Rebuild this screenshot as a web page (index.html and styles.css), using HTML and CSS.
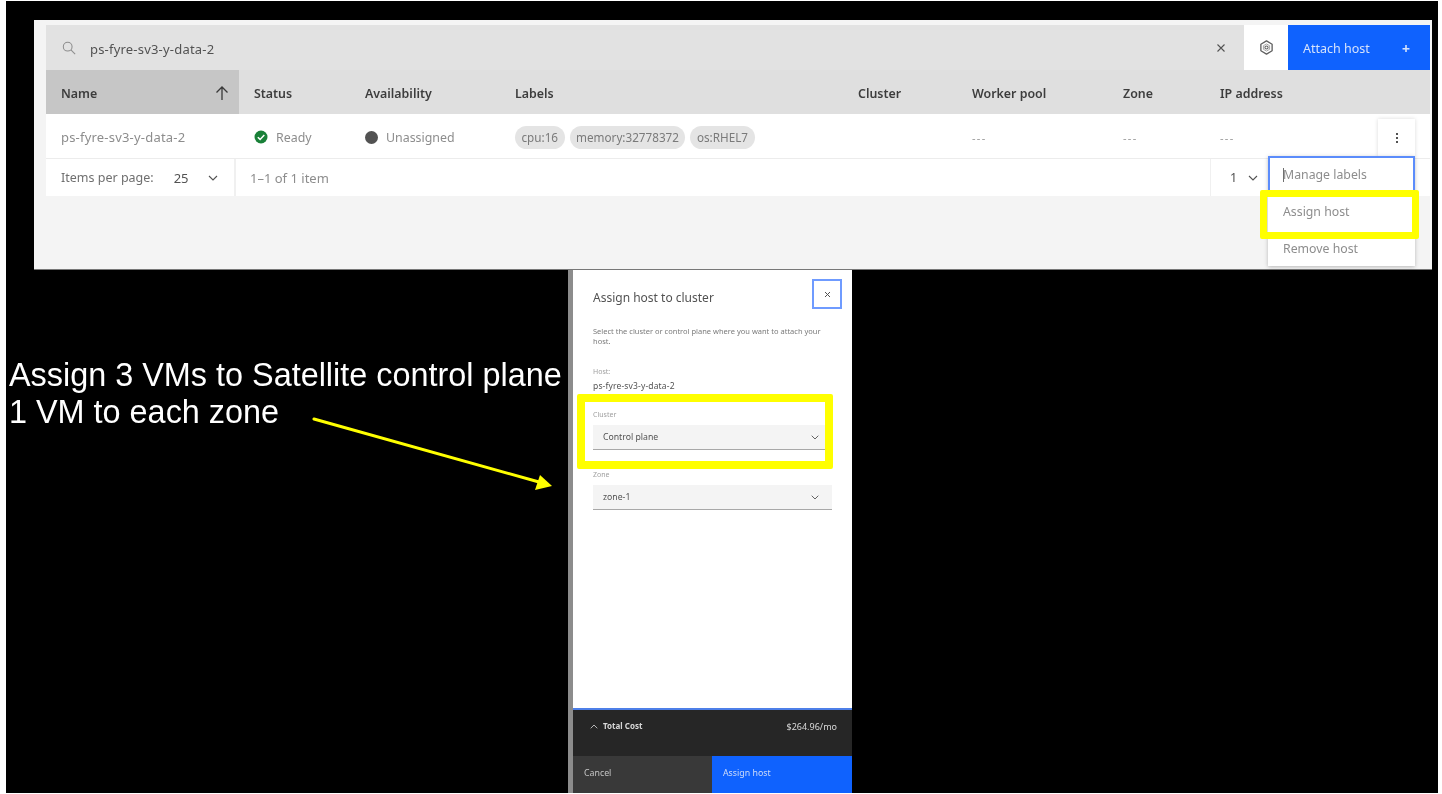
FILE: index.html
```html
<!DOCTYPE html>
<html>
<head>
  <meta charset="utf-8">
  <title>Assign host</title>
  <link rel="stylesheet" href="styles.css">
</head>
<body>
<div id="slide">

  <div id="hosts_panel">
    <div class="toolbar">
      <svg class="search_icon" width="14" height="14" viewBox="0 0 16 16"><circle cx="6.5" cy="6.5" r="5" fill="none" stroke="#8d8d8d" stroke-width="1.2"/><path d="M10.2 10.2L15 15" stroke="#8d8d8d" stroke-width="1.2"/></svg>
      <span class="search_text host_name">ps-fyre-sv3-y-data-2</span>
      <svg class="clear_icon" width="10" height="10" viewBox="0 0 10 10"><path d="M1.5 1.5l7 7M8.5 1.5l-7 7" stroke="#525252" stroke-width="1.1"/></svg>
      <div class="settings_btn">
        <svg width="15" height="15" viewBox="0 0 16 16"><path d="M8 1l6 3.500v7L8 15l-6-3.500v-7z" fill="none" stroke="#5f5f5f" stroke-width="1.400" stroke-linejoin="round"/><path d="M8 4.200l3.300 1.900v3.800L8 11.800l-3.300-1.900V6.100z" fill="none" stroke="#8d8d8d" stroke-width=".8"/><circle cx="8" cy="8" r="1.700" fill="none" stroke="#5f5f5f" stroke-width="1.100"/></svg>
      </div>
      <div class="attach_btn"><span>Attach host</span><span class="plus">+</span></div>
    </div>

    <div class="table_row table_head">
      <div class="cell name_cell">Name
        <svg width="14" height="16" viewBox="0 0 14 16"><path d="M7 15V2M1.500 7.500L7 2l5.500 5.500" fill="none" stroke="#393939" stroke-width="1.300"/></svg>
      </div>
      <div class="cell">Status</div>
      <div class="cell">Availability</div>
      <div class="cell">Labels</div>
      <div class="cell">Cluster</div>
      <div class="cell">Worker pool</div>
      <div class="cell">Zone</div>
      <div class="cell">IP address</div>
    </div>

    <div class="table_row table_body">
      <div class="cell host_name">ps-fyre-sv3-y-data-2</div>
      <div class="cell">
        <svg class="status_icon" width="14" height="14" viewBox="0 0 14 14"><circle cx="7" cy="7" r="6.500" fill="#198038"/><path d="M3.800 7.200l2.300 2.200 4.200-4.300" fill="none" stroke="#fff" stroke-width="1.500"/></svg>
        Ready
      </div>
      <div class="cell"><span class="dot"></span>Unassigned</div>
      <div class="cell chips">
        <span class="chip">cpu:16</span>
        <span class="chip">memory:32778372</span>
        <span class="chip">os:RHEL7</span>
      </div>
      <div class="cell"></div>
      <div class="cell dashes">---</div>
      <div class="cell dashes">---</div>
      <div class="cell dashes">---</div>
    </div>

    <div class="pager">
      <div class="pager_left">
        <span>Items per page:</span>
        <span class="pager_num">25</span>
        <svg class="chev" width="10" height="6" viewBox="0 0 10 6"><path d="M1 1l4 4 4-4" fill="none" stroke="#525252" stroke-width="1.100"/></svg>
      </div>
      <div class="pager_count">1–1 of 1 item</div>
      <div class="pager_right">
        <span class="pager_page">1</span>
        <svg class="chev" width="10" height="6" viewBox="0 0 10 6"><path d="M1 1l4 4 4-4" fill="none" stroke="#525252" stroke-width="1.100"/></svg>
      </div>
    </div>

    <div class="overflow_btn"><i></i><i></i><i></i></div>
    <div class="overflow_menu">
      <div class="menu_item menu_focus"><span class="caret"></span>Manage labels</div>
      <div class="menu_item">Assign host</div>
      <div class="menu_item">Remove host</div>
    </div>
  </div>
  <div class="yellow_box assign_mark"></div>

  <div id="drawer_edge"></div>
  <div id="drawer">
    <div class="drawer_body">
      <div class="drawer_head">
        <h2>Assign host to cluster</h2>
        <div class="close_btn">
          <svg width="7" height="7" viewBox="0 0 7 7"><path d="M1 1l5 5M6 1L1 6" stroke="#525252" stroke-width="1"/></svg>
        </div>
      </div>
      <p class="drawer_desc">Select the cluster or control plane where you want to attach your host.</p>
      <div class="field_label host_label">Host:</div>
      <div class="host_value">ps-fyre-sv3-y-data-2</div>
      <div class="field_label cluster_label">Cluster</div>
      <div class="select">Control plane
        <svg width="8" height="5" viewBox="0 0 8 5"><path d="M.7.7L4 4 7.300.7" fill="none" stroke="#525252" stroke-width=".9"/></svg>
      </div>
      <div class="field_label zone_label">Zone</div>
      <div class="select">zone-1
        <svg width="8" height="5" viewBox="0 0 8 5"><path d="M.7.7L4 4 7.300.7" fill="none" stroke="#525252" stroke-width=".9"/></svg>
      </div>
    </div>
    <div class="cost_bar">
      <div class="cost_name">
        <svg width="8" height="5" viewBox="0 0 8 5"><path d="M.7 4.300L4 1l3.300 3.300" fill="none" stroke="#c6c6c6" stroke-width=".9"/></svg>
        Total Cost
      </div>
      <div class="cost_value">$264.96/mo</div>
    </div>
    <div class="drawer_btns">
      <div class="btn_cancel">Cancel</div>
      <div class="btn_assign">Assign host</div>
    </div>
  </div>
  <div class="yellow_box cluster_mark"></div>

  <div id="note">Assign 3 VMs to Satellite control plane<br>1 VM to each zone</div>
  <svg id="arrow" width="260" height="80" viewBox="0 0 260 80">
    <path d="M3 3L228 66" stroke="#ffff00" stroke-width="3" stroke-linecap="round"/>
    <path d="M241 70L224 74L229 59z" fill="#ffff00"/>
  </svg>
</div>
</body>
</html>
```

FILE: styles.css
```css
html, body {
  height: 100%;
  margin: 0;
}
body {
  background-color: #fff;
  font-family: "Noto Sans", sans-serif;
  overflow: hidden;
}

/* the slide is a free canvas, the pasted screenshots sit on it */
#slide {
  position: absolute;
  left: 6px;
  top: 1px;
  width: 1432px;
  height: 792px;
  background: #000;
  filter: blur(0.6px);
}

#hosts_panel {
  position: absolute;
  left: 28px;
  top: 19px;
  width: 1398px;
  height: 250px;
  box-sizing: border-box;
  padding: 5px 2px 0 12px;
  background: #f4f4f4;
  border-bottom: 1px solid #777;
}

.host_name {
  font-size: 13px;
  letter-spacing: 0.2px;
}

.toolbar {
  display: flex;
  align-items: center;
  height: 45px;
  background: #e2e2e2;
  color: #525252;
  font-size: 12.500px;
}
.search_icon {
  margin-left: 16px;
}
.search_text {
  margin-left: 14px;
  padding-top: 2px;
  flex: 1;
}
.clear_icon {
  margin-right: 18px;
}
.settings_btn {
  width: 44px;
  height: 45px;
  background: #fff;
  display: flex;
  align-items: center;
  justify-content: center;
}
.attach_btn {
  width: 142px;
  height: 45px;
  box-sizing: border-box;
  padding: 2px 20px 0 15px;
  background: #0f62fe;
  color: #d5e2fb;
  display: flex;
  align-items: center;
  justify-content: space-between;
}
.plus {
  font-size: 14px;
  font-weight: 700;
}

.table_row {
  display: grid;
  grid-template-columns: 193px 111px 150px 343px 114px 151px 97px 225px;
  align-items: center;
  font-size: 12.400px;
}
.cell {
  padding-left: 15px;
  display: flex;
  align-items: center;
  height: 100%;
}
.table_head {
  height: 44px;
  background: #dfdfdf;
  color: #3d3d3d;
  font-weight: 600;
}
.table_head .cell {
  box-sizing: border-box;
  padding-top: 2px;
}
.table_head .name_cell {
  background: #c6c6c6;
  justify-content: space-between;
  padding-right: 10px;
}
.table_body {
  height: 45px;
  box-sizing: border-box;
  padding-top: 2px;
  background: #fff;
  border-bottom: 1px solid #ececec;
  color: #8d8d8d;
}
.status_icon {
  margin-right: 8px;
}
.dot {
  width: 13px;
  height: 13px;
  border-radius: 50%;
  background: #525252;
  margin-right: 8px;
}
.chips {
  gap: 5px;
}
.chip {
  padding: 0 6.500px;
  height: 23px;
  line-height: 22px;
  border-radius: 12px;
  background: #e4e4e4;
  color: #7a7a7a;
  font-size: 11.700px;
  white-space: nowrap;
}
.dashes {
  color: #9a9a9a;
  font-size: 11px;
  letter-spacing: 1.300px;
}

.pager {
  display: flex;
  align-items: center;
  height: 37px;
  background: #fff;
  font-size: 12.500px;
  color: #6f6f6f;
}
.pager_left {
  width: 190px;
  height: 100%;
  box-sizing: border-box;
  padding-left: 15px;
  display: flex;
  align-items: center;
  border-right: 2px solid #f0f0f0;
}
.pager_num {
  margin-left: 20px;
  color: #525252;
  font-size: 13px;
}
.pager_left .chev {
  margin-left: 19px;
}
.pager_count {
  flex: 1;
  padding-left: 14px;
  font-size: 13px;
  color: #8d8d8d;
}
.pager_right {
  width: 220px;
  height: 100%;
  box-sizing: border-box;
  padding-left: 19px;
  display: flex;
  align-items: center;
  border-left: 1px solid #f0f0f0;
}
.pager_page {
  color: #525252;
}
.pager_right .chev {
  margin-left: 11px;
}

/* menu lies over the table */
.overflow_btn {
  position: absolute;
  left: 1344px;
  top: 99px;
  width: 37px;
  height: 38px;
  background: #fff;
  box-shadow: 0 0 4px rgba(0, 0, 0, 0.15);
  display: flex;
  flex-direction: column;
  align-items: center;
  justify-content: center;
  gap: 2px;
}
.overflow_btn i {
  width: 2px;
  height: 2px;
  background: #525252;
}
.overflow_menu {
  position: absolute;
  left: 1234px;
  top: 136px;
  width: 147px;
  height: 110px;
  background: #fff;
  box-shadow: 0 1px 4px rgba(0, 0, 0, 0.25);
  font-size: 12.300px;
  color: #8d8d8d;
}
.menu_item {
  height: 37px;
  box-sizing: border-box;
  padding-left: 15px;
  display: flex;
  align-items: center;
}
.menu_focus {
  border: 2px solid #5b8cfb;
  border-bottom: 0;
  padding: 0 0 2px 13px;
}
.caret {
  width: 1px;
  height: 14px;
  background: #6f6f6f;
  margin-right: -1px;
}

.yellow_box {
  position: absolute;
  box-sizing: border-box;
  border: 7px solid #ffff00;
  border-radius: 2px;
}
.assign_mark {
  left: 1254px;
  top: 189px;
  width: 159px;
  height: 49px;
}
.cluster_mark {
  left: 571px;
  top: 393px;
  width: 256px;
  height: 75px;
  border-width: 8px;
}

#drawer_edge {
  position: absolute;
  left: 562px;
  top: 269px;
  width: 5px;
  height: 523px;
  background: #8c8c8c;
}
#drawer {
  position: absolute;
  left: 567px;
  top: 269px;
  width: 279px;
  height: 523px;
  display: flex;
  flex-direction: column;
  background: #fff;
}
.drawer_body {
  flex: 1;
  padding: 9px 20px 0 20px;
  border-bottom: 2px solid #4d7fe8;
  color: #6f6f6f;
}
.drawer_head {
  display: flex;
  align-items: center;
  justify-content: space-between;
  margin-right: -10px;
  height: 30px;
}
.drawer_head h2 {
  margin: 0;
  padding-top: 6px;
  font-weight: 400;
  font-size: 12px;
  color: #525252;
}
.close_btn {
  width: 30px;
  height: 30px;
  box-sizing: border-box;
  border: 2px solid #6f9bff;
  display: flex;
  align-items: center;
  justify-content: center;
}
.drawer_desc {
  margin: 17px 0 0;
  font-size: 7.500px;
  line-height: 10px;
  color: #7a7a7a;
}
.field_label {
  font-size: 7px;
  line-height: 10px;
  color: #a0a0a0;
}
.host_label {
  margin-top: 21px;
}
.host_value {
  margin-top: 3px;
  font-size: 8.500px;
  letter-spacing: 0.15px;
  line-height: 11px;
  color: #525252;
}
.cluster_label {
  margin-top: 19px;
}
.zone_label {
  margin-top: 20px;
}
.select {
  margin-top: 5px;
  height: 25px;
  box-sizing: border-box;
  padding: 0 13px 0 10px;
  display: flex;
  align-items: center;
  justify-content: space-between;
  background: #f4f4f4;
  border-bottom: 1px solid #a8a8a8;
  font-size: 8.700px;
  color: #525252;
}

.cost_bar {
  height: 46px;
  box-sizing: border-box;
  padding: 10px 15px 0 17px;
  display: flex;
  justify-content: space-between;
  background: #262626;
  font-size: 8px;
  color: #d8d8d8;
}
.cost_value {
  font-size: 9px;
}
.cost_name {
  font-weight: 700;
  display: flex;
  align-items: flex-start;
  gap: 5px;
}
.cost_name svg {
  margin-top: 4px;
}
.drawer_btns {
  display: flex;
  height: 37px;
  font-size: 8.800px;
}
.btn_cancel {
  width: 139px;
  box-sizing: border-box;
  padding: 11px 0 0 11px;
  background: #393939;
  color: #c6c6c6;
}
.btn_assign {
  flex: 1;
  padding: 11px 0 0 11px;
  background: #0f62fe;
  color: #cfdcf8;
}

#note {
  position: absolute;
  left: 3px;
  top: 356px;
  font-family: "Liberation Sans", sans-serif;
  font-size: 32.400px;
  line-height: 37px;
  color: #fff;
  white-space: nowrap;
}
#arrow {
  position: absolute;
  left: 305px;
  top: 415px;
}
```
